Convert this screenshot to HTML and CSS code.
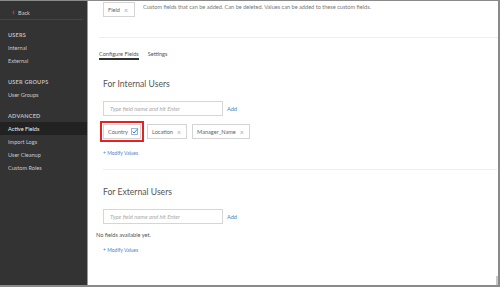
FILE: index.html
```html
<!DOCTYPE html>
<html lang="en">
<head>
  <meta charset="UTF-8">
  <title>Active Fields</title>
  <link rel="stylesheet" href="styles.css">
</head>
<body>

  <div class="sidebar">
    <div class="back"><span class="chev">&#8249;</span> Back</div>

    <div class="group">
      <div class="group-title">Users</div>
      <div class="item">Internal</div>
      <div class="item">External</div>
    </div>

    <div class="group">
      <div class="group-title">User Groups</div>
      <div class="item">User Groups</div>
    </div>

    <div class="group">
      <div class="group-title">Advanced</div>
      <div class="item active">Active Fields</div>
      <div class="item">Import Logs</div>
      <div class="item">User Cleanup</div>
      <div class="item">Custom Roles</div>
    </div>
  </div>

  <div class="main">
    <div class="intro">
      <span class="tag">Field <span class="x">&times;</span></span>
      <span class="intro-text">Custom fields that can be added. Can be deleted. Values can be added to these custom fields.</span>
    </div>

    <div class="rule"></div>

    <div class="tabs">
      <span class="tab current">Configure Fields</span>
      <span class="tab">Settings</span>
    </div>

    <div class="section">
      <h3>For Internal Users</h3>
      <div class="add-row">
        <input type="text" placeholder="Type field name and hit Enter">
        <a class="add">Add</a>
      </div>
      <div class="tags">
        <span class="tag marked">Country
          <svg class="check" width="7" height="7" viewBox="0 0 7 7">
            <rect x="0.5" y="0.5" width="6" height="6" fill="#fff" stroke="#9bb8d8"/>
            <path d="M1.6 3.6 L3 5 L6.4 1.2" fill="none" stroke="#3a7bd5" stroke-width="1"/>
          </svg>
        </span>
        <span class="tag">Location <span class="x">&times;</span></span>
        <span class="tag">Manager_Name <span class="x">&times;</span></span>
      </div>
      <a class="modify">+ Modify Values</a>
    </div>

    <div class="divider"></div>

    <div class="section">
      <h3>For External Users</h3>
      <div class="add-row">
        <input type="text" placeholder="Type field name and hit Enter">
        <a class="add">Add</a>
      </div>
      <p class="empty">No fields available yet.</p>
      <a class="modify">+ Modify Values</a>
    </div>

    <div class="scroll-thumb"></div>
  </div>

</body>
</html>
```

FILE: styles.css
```css
* { box-sizing: border-box; }
body { margin: 0; width: 500px; height: 287px; display: flex; font-family: Lato, "Open Sans", sans-serif; font-size: 5.6px; color: #555; border-top: 1px solid #8a8a8a; border-right: 2px solid #8a8a8a; border-bottom: 2px solid #8a8a8a; overflow: hidden; }

.sidebar { width: 88px; background: #333; color: #c8c8c8; border-right: 1px solid #9a9a9a; }
.back { height: 19px; line-height: 22px; padding-left: 12px; margin: 0 4px 0 0; border-bottom: 1px solid #444; color: #ccc; }
.back .chev { color: #d9453a; font-size: 9px; font-weight: bold; margin-right: 2px; }
.group { margin-top: 8px; }
.group-title { line-height: 13px; padding-left: 8px; text-transform: uppercase; font-weight: bold; color: #bbb; letter-spacing: 0.2px; }
.item { line-height: 13px; padding-left: 8px; }
.item.active { background: #222; color: #eee; }

.main { flex: 1; position: relative; padding: 1px 0 0 11px; background: #fff; }
.intro { display: flex; align-items: flex-start; gap: 8px; margin-left: 4px; height: 15px; }
.intro-text { color: #777; line-height: 8px; margin-top: 1px; }
.tag { display: inline-flex; align-items: center; height: 15px; padding: 0 5px 0 4px; border: 1px solid #d4d4d4; color: #666; gap: 4px; }
.tag .x { color: #aaa; font-size: 7px; }
.intro .tag { width: 32px; }

.rule { height: 1px; background: #eee; margin-top: 20px; }

.tabs { display: flex; gap: 9px; margin-top: 12px; }
.tab { line-height: 8px; border-bottom: 2px solid transparent; color: #555; }
.tab.current { border-bottom-color: #333; }

.section { padding-left: 4px; }
.section h3 { margin: 18px 0 0; font-size: 8.6px; font-weight: normal; line-height: 12px; color: #555; }
.divider + .section h3 { margin-top: 16px; }
.add-row { display: flex; align-items: center; gap: 4px; margin-top: 11px; }
.add-row input { width: 120px; height: 15px; border: 1px solid #d6d6d6; padding: 0 6px; font-family: Lato, sans-serif; font-size: 5.8px; font-style: italic; outline: none; }
.add-row input::placeholder { color: #aaa; }
.add { color: #3d7fc9; font-size: 5.6px; }

.tags { display: flex; gap: 5px; margin-top: 8px; }
.tag.marked { outline: 2px solid #e52222; outline-offset: 1px; margin-right: 1px; gap: 3px; padding-right: 2px; }
.check { display: block; }

.modify { display: block; margin-top: 10px; line-height: 8px; color: #4a86cf; font-size: 5px; }

.divider { height: 1px; background: #eee; margin: 12px 1px 0 4px; }

.empty { margin: 7px 0 0 -7px; line-height: 8px; color: #555; }
.section .empty + .modify { margin-top: 7px; }

.scroll-thumb { position: absolute; right: 0; bottom: 0; width: 2px; height: 9px; background: #c8c8c8; }
```
